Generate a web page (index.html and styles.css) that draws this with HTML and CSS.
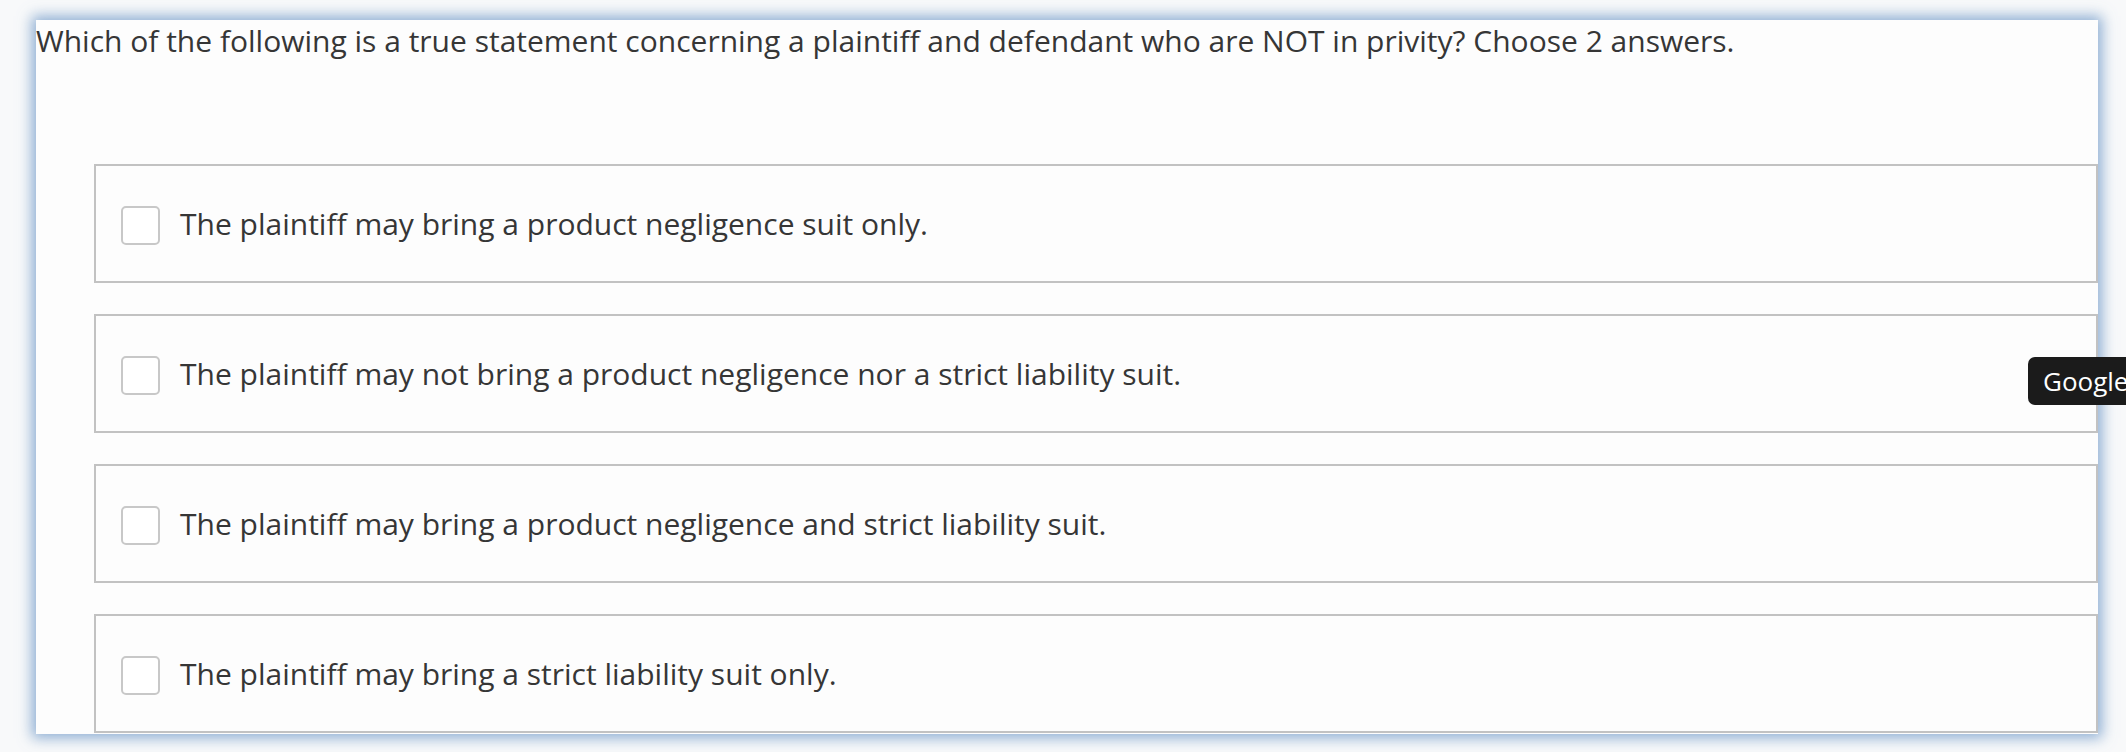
FILE: index.html
```html
<!DOCTYPE html>
<html lang="en">
<head>
<meta charset="utf-8">
<title>Question</title>
<link rel="stylesheet" href="styles.css">
</head>
<body>
<div class="panel">
  <p class="question">Which of the following is a true statement concerning a plaintiff and defendant who are NOT in privity? Choose 2 answers.</p>
  <div class="options">
    <label class="option"><span class="box"></span><span class="label">The plaintiff may bring a product negligence suit only.</span></label>
    <label class="option"><span class="box"></span><span class="label">The plaintiff may not bring a product negligence nor a strict liability suit.</span></label>
    <label class="option"><span class="box"></span><span class="label">The plaintiff may bring a product negligence and strict liability suit.</span></label>
    <label class="option"><span class="box"></span><span class="label">The plaintiff may bring a strict liability suit only.</span></label>
  </div>
</div>
<div class="tooltip">Google</div>
</body>
</html>
```
FILE: styles.css
```css
html, body {
  margin: 0;
  padding: 0;
}
body {
  width: 2126px;
  height: 752px;
  overflow: hidden;
  background: #f8f9fa;
  font-family: "Open Sans", "Liberation Sans", sans-serif;
  color: #363636;
  position: relative;
}
.panel {
  margin: 20px 0 0 36px;
  width: 2062px;
  height: 714px;
  background: #fdfdfd;
  box-shadow: 0 0 13px 4px rgba(105, 148, 198, 0.75);
  overflow: hidden;
}
.question {
  margin: 1px 0 0 0;
  font-size: 30px;
  line-height: 40px;
  white-space: nowrap;
}
.options {
  margin-top: 103px;
  padding-left: 58px;
  display: flex;
  flex-direction: column;
  gap: 31px;
}
.option {
  box-sizing: border-box;
  height: 119px;
  border: 2px solid #c2c2c2;
  display: flex;
  align-items: center;
  padding-left: 25px;
  background: #fdfdfd;
}
.box {
  box-sizing: border-box;
  width: 39px;
  height: 39px;
  border: 2px solid #c8c8c8;
  border-radius: 5px;
  background: #ffffff;
  margin-right: 20px;
  flex: none;
  position: relative;
  top: 2px;
}
.label {
  font-size: 30px;
  line-height: 40px;
  color: #363636;
}
.tooltip {
  position: absolute;
  left: 2028px;
  top: 357px;
  width: 110px;
  height: 48px;
  padding-left: 15px;
  border-radius: 7px;
  background: #1b1b1b;
  color: #ffffff;
  font-size: 26px;
  line-height: 48px;
  white-space: nowrap;
}
```
